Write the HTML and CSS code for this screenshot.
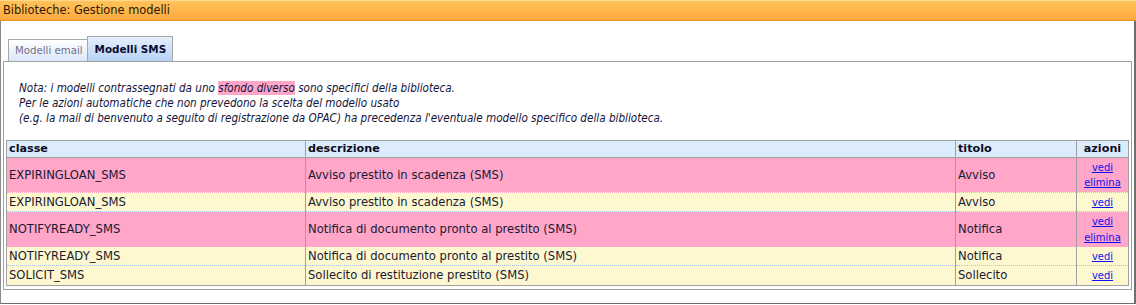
FILE: index.html
```html
<!DOCTYPE html>
<html lang="it">
  <head>
    <meta charset="UTF-8" />
    <title>Biblioteche: Gestione modelli</title>
    <link rel="stylesheet" href="styles.css">
  </head>
  <body>
    <div class="window">
      <div class="titlebar">Biblioteche: Gestione modelli</div>
      <div class="panel">
        <div class="tabs">
          <span class="tab">Modelli email</span>
          <span class="tab active">Modelli SMS</span>
        </div>
        <div class="tab-body">
          <p class="note">
            Nota: i modelli contrassegnati da uno <span class="mark">sfondo diverso</span> sono specifici della biblioteca.<br>
            Per le azioni automatiche che non prevedono la scelta del modello usato<br>
            (e.g. la mail di benvenuto a seguito di registrazione da OPAC) ha precedenza l'eventuale modello specifico della biblioteca.
          </p>
          <table class="models">
            <colgroup>
              <col class="c-class">
              <col class="c-desc">
              <col class="c-title">
              <col class="c-actions">
            </colgroup>
            <thead>
              <tr>
                <th>classe</th>
                <th>descrizione</th>
                <th>titolo</th>
                <th class="actions">azioni</th>
              </tr>
            </thead>
            <tbody>
              <tr class="local">
                <td>EXPIRINGLOAN_SMS</td>
                <td>Avviso prestito in scadenza (SMS)</td>
                <td>Avviso</td>
                <td class="actions"><a href="#">vedi</a><br><a href="#">elimina</a></td>
              </tr>
              <tr>
                <td>EXPIRINGLOAN_SMS</td>
                <td>Avviso prestito in scadenza (SMS)</td>
                <td>Avviso</td>
                <td class="actions"><a href="#">vedi</a></td>
              </tr>
              <tr class="local">
                <td>NOTIFYREADY_SMS</td>
                <td>Notifica di documento pronto al prestito (SMS)</td>
                <td>Notifica</td>
                <td class="actions"><a href="#">vedi</a><br><a href="#">elimina</a></td>
              </tr>
              <tr>
                <td>NOTIFYREADY_SMS</td>
                <td>Notifica di documento pronto al prestito (SMS)</td>
                <td>Notifica</td>
                <td class="actions"><a href="#">vedi</a></td>
              </tr>
              <tr>
                <td>SOLICIT_SMS</td>
                <td>Sollecito di restituzione prestito (SMS)</td>
                <td>Sollecito</td>
                <td class="actions"><a href="#">vedi</a></td>
              </tr>
            </tbody>
          </table>
        </div>
      </div>
    </div>
  </body>
</html>
```

FILE: styles.css
```css
body {
  margin: 0;
  font-family: "DejaVu Sans", Verdana, sans-serif;
  font-size: 11px;
  color: #1a1a33;
  background: #fff;
}
.window {
  width: 1136px;
  height: 305px;
  box-sizing: border-box;
}
.titlebar {
  height: 20px;
  line-height: 20px;
  padding-left: 3px;
  font-size: 11.4px;
  color: #2a1a00;
  background: linear-gradient(#ffc45c, #ffa83e);
  border-bottom: 1px solid #e8951f;
  box-shadow: inset 0 1px 0 #ffd88a;
}
.panel {
  height: 283px;
  box-sizing: border-box;
  padding: 15px 2px 0 2px;
  border-left: 1px solid #8a8a8a;
  border-right: 2px solid #6e6e6e;
  border-bottom: 1px solid #6e6e6e;
}
.tabs {
  display: flex;
  align-items: flex-end;
  margin-left: 5px;
}
.tab {
  height: 21px;
  line-height: 22px;
  padding: 0 4px 0 6px;
  border: 1px solid #a8a8a8;
  border-bottom: none;
  background: linear-gradient(#ffffff, #dce7f8);
  color: #707088;
  font-size: 10.2px;
}
.tab.active {
  height: 24px;
  line-height: 24px;
  padding: 0 6px 0 7px;
  margin-left: -1px;
  background: linear-gradient(#e6effc, #b7d2f6);
  color: #0c0c30;
  font-size: 10.4px;
  font-weight: bold;
}
.tab-body {
  height: 229px;
  box-sizing: border-box;
  border: 1px solid #a0a0a0;
  padding: 19px 2px 0 2px;
}
.note {
  margin: 0 0 14px 13px;
  font-family: "DejaVu Sans Condensed", "DejaVu Sans", sans-serif;
  font-size: 11.6px;
  font-style: italic;
  line-height: 15px;
  color: #14143a;
}
.mark {
  background: #ffa6c9;
}
.models {
  width: 100%;
  border-collapse: collapse;
  border: 1px solid #a0a0a0;
  table-layout: fixed;
}
.c-class { width: 299px; }
.c-desc { width: 650px; }
.c-title { width: 121px; }
.c-actions { width: 52px; }
.models th {
  text-align: left;
  font-weight: bold;
  font-size: 11.2px;
  color: #0c0c20;
  background: #dcecfc;
  padding: 0 2px;
  height: 16px;
  line-height: 16px;
  border: 1px solid #a0a0a0;
}
.models td {
  padding: 2px 2px 1px;
  font-size: 11.6px;
  line-height: 15.4px;
  border-left: 1px solid #a0a0a0;
  border-right: 1px solid #a0a0a0;
  border-bottom: 1px dotted #a8c4e8;
  background: #fdf8d0;
}
.models tr.local td {
  background: #ffa6c9;
  border-bottom-color: #ffa6c9;
}
.models .actions {
  text-align: center;
}
.models a {
  color: #1010ee;
  font-size: 10px;
}
```
